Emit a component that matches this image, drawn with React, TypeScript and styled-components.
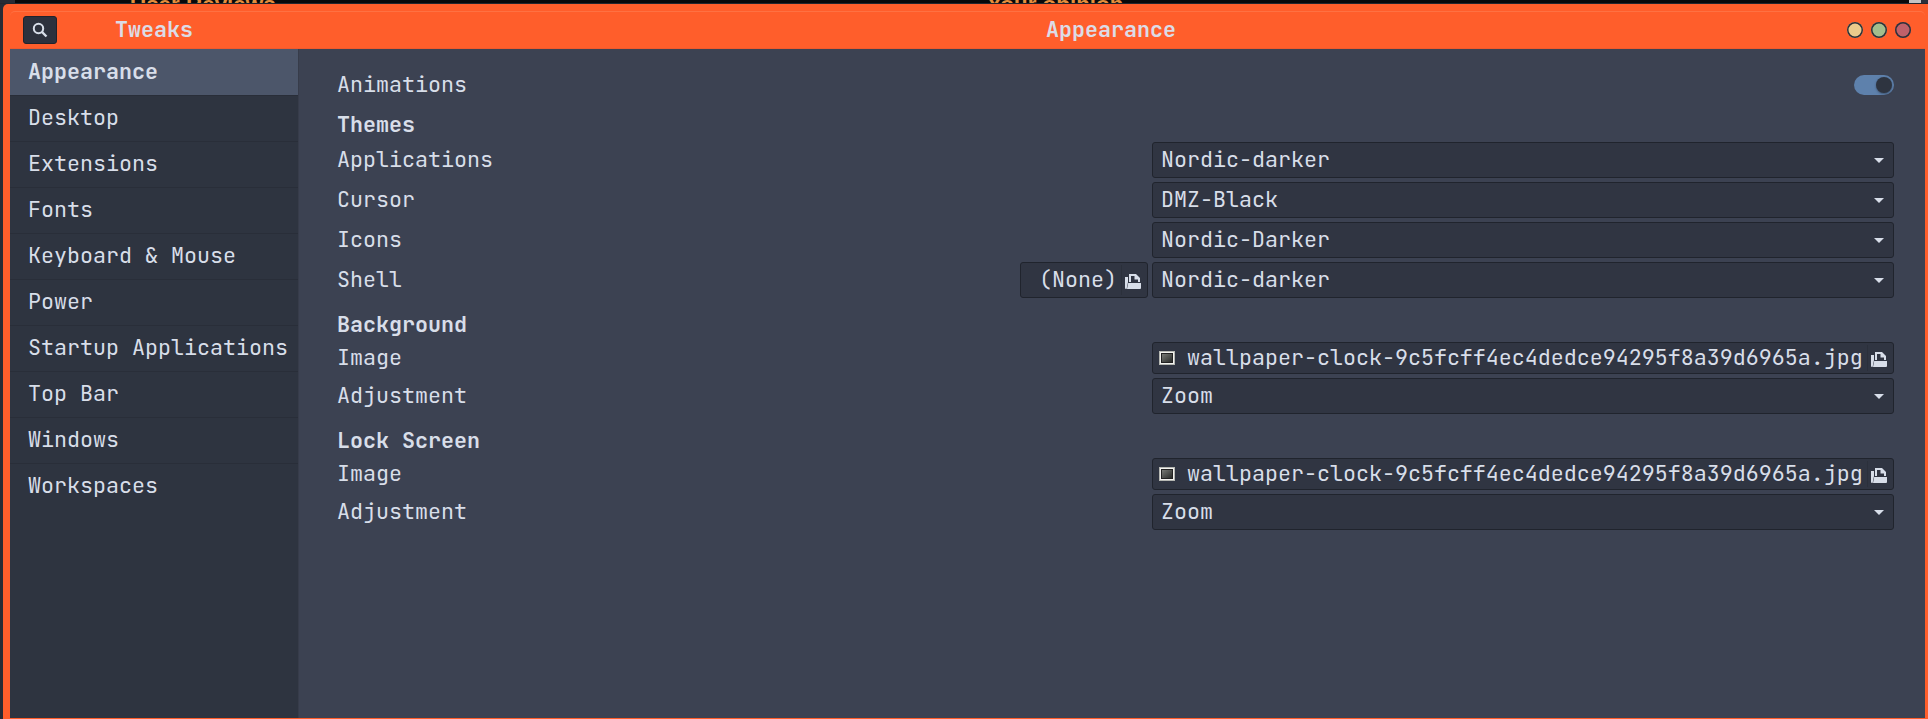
import React from "react";
import styled, { createGlobalStyle } from "styled-components";

const Global = createGlobalStyle`
  * { box-sizing: border-box; }
  body {
    margin: 0;
    overflow: hidden;
    background: #0b0b0d;
    color: #d8dee9;
    font: 21.67px/28px "JetBrains Mono", "DejaVu Sans Mono", monospace;
  }
`;

const Desktop = styled.div`
  position: relative;
  height: 719px;
  padding: 4px 0 0 3px;
  overflow: hidden;
  background: linear-gradient(90deg, #272b35 0 15px, #08090b 15px 1921px, #2b303b 1921px);
`;

const Backdrop = styled.div<{ $left: number }>`
  position: absolute;
  top: -8px;
  left: ${(p) => p.$left}px;
  font: bold 22.4px/26px "Liberation Sans", Arial, sans-serif;
  white-space: pre;
  color: #e58e3c;
`;

const BackdropThumb = styled.div`
  position: absolute;
  top: 0;
  left: 1909px;
  width: 12px;
  height: 3px;
  background: #c4c4c4;
`;

const BackdropEdge = styled.div`
  position: absolute;
  top: 3px;
  left: 0;
  width: 100%;
  height: 1px;
  background: #23262e;
`;

const Window = styled.div`
  position: relative;
  display: flex;
  flex-direction: column;
  height: 715px;
  padding: 0 3px 1px 7px;
  background: #ff5e2b;
  border-radius: 5px 0 0 0;
`;

const Header = styled.header`
  display: flex;
  align-items: center;
  height: 38px;
  margin-top: 7px;
  border-top: 1px solid #ff7142;
  border-bottom: 1px solid #f05a2c;
  border-radius: 5px 5px 0 0;
`;

const SidebarHeader = styled.div`
  display: flex;
  align-items: center;
  width: 289px;
  padding-left: 13px;
`;

const SearchButton = styled.button`
  display: flex;
  align-items: center;
  justify-content: center;
  width: 34px;
  height: 28px;
  padding: 0;
  border: 1px solid #20232c;
  border-radius: 3px;
  background: #2d313d;
`;

const Title = styled.h1`
  margin: 0;
  font-size: inherit;
  color: #dcdce6;
`;

const SidebarTitle = styled(Title)`
  margin-left: 58px;
`;

const WindowTitle = styled(Title)`
  flex: 1;
  padding-left: 747px;
`;

const Controls = styled.div`
  display: flex;
  gap: 8px;
  padding-right: 14px;
`;

const Control = styled.button<{ $color: string }>`
  width: 16px;
  height: 16px;
  padding: 0;
  border: 0;
  border-radius: 50%;
  background: ${(p) => p.$color};
  box-shadow: inset 0 0 0 1.5px #2d3039;
`;

const Body = styled.div`
  display: flex;
  flex: 1;
`;

const Sidebar = styled.nav`
  width: 289px;
  background: #2e3440;
  border-right: 1px solid #373c4a;
`;

const NavItem = styled.div<{ $active: boolean }>`
  height: 46px;
  padding-left: 18px;
  line-height: 43px;
  white-space: nowrap;
  font-weight: ${(p) => (p.$active ? "bold" : "normal")};
  background: ${(p) => (p.$active ? "#4c566a" : "transparent")};
  border-top: 1px solid ${(p) => (p.$active ? "#4c566a" : "#292e39")};
`;

const Main = styled.main`
  display: flex;
  flex: 1;
  flex-direction: column;
  gap: 4px;
  padding: 22px 31px 0 38px;
  background: #3c4252;
`;

const Heading = styled.h2<{ $space?: number }>`
  height: 28px;
  margin: ${(p) => p.$space ?? 8}px 0 0;
  font-size: inherit;
  line-height: 30px;
`;

const Row = styled.div<{ $height?: number }>`
  display: flex;
  align-items: center;
  gap: 4px;
  height: ${(p) => p.$height ?? 36}px;
`;

const Label = styled.span`
  flex: 1;
`;

const Switch = styled.div`
  display: flex;
  justify-content: flex-end;
  width: 40px;
  height: 20px;
  padding: 2px;
  border-radius: 10px;
  background: #5e81ac;
`;

const Knob = styled.div`
  width: 16px;
  height: 16px;
  border-radius: 50%;
  background: #2e3440;
  box-shadow: 0 1px 2px rgba(30, 36, 48, 0.5);
`;

const Field = styled.div<{ $width?: number; $height?: number }>`
  display: flex;
  align-items: center;
  width: ${(p) => p.$width ?? 742}px;
  height: ${(p) => p.$height ?? 36}px;
  padding: 0 9px 0 8px;
  border: 1px solid #20242d;
  border-radius: 3px;
  background: #303542;
  white-space: nowrap;
`;

const Value = styled.span`
  flex: 1;
`;

const FileField = styled(Field)`
  padding: 0 6px;
`;

const FileName = styled.span<{ $indent: number }>`
  flex: 1;
  min-width: 0;
  padding-left: ${(p) => p.$indent}px;
`;

const Divider = styled.span`
  align-self: stretch;
  width: 1px;
  margin: 2px 3px 2px 0;
  background: #2b303b;
`;

const FolderGlyph = styled.svg`
  flex: none;
  margin-top: 2px;
  fill: #d8dee9;
`;

const Arrow = () => (
  <svg width="10" height="6" viewBox="0 0 10 6" fill="#d8dee9">
    <path d="M0 1h10L5 6z" />
  </svg>
);

const SearchIcon = () => (
  <svg width="16" height="16" viewBox="0 0 16 16" fill="none" stroke="#d8dee9" strokeWidth="2">
    <circle cx="6.5" cy="6.5" r="4.7" />
    <path d="M9.9 9.9 14.5 14.5" strokeWidth="2.3" />
  </svg>
);

const OpenIcon = () => (
  <FolderGlyph width="16" height="16" viewBox="0 0 16 16">
    <path d="M0 4h3v5L1.6 16H1a1 1 0 0 1-1-1z" />
    <path d="M4 1h7l4 4v4h-2V6.5H9.5V3H6v6H4z" />
    <path d="M3.2 10H16v5a1 1 0 0 1-1 1H2z" />
  </FolderGlyph>
);

const ImageIcon = () => (
  <svg width="16" height="14" viewBox="0 0 16 14">
    <defs>
      <linearGradient id="screen" x1="0" y1="0" x2="1" y2="1">
        <stop offset="0" stopColor="#777975" />
        <stop offset="1" stopColor="#292b29" />
      </linearGradient>
    </defs>
    <rect width="16" height="14" fill="#b5b7b2" />
    <rect x="1" y="1" width="14" height="12" fill="#f2f2ef" />
    <rect x="2" y="2" width="12" height="10" fill="#222" />
    <rect x="3" y="3" width="10" height="8" fill="url(#screen)" />
  </svg>
);

const sections = [
  "Appearance",
  "Desktop",
  "Extensions",
  "Fonts",
  "Keyboard & Mouse",
  "Power",
  "Startup Applications",
  "Top Bar",
  "Windows",
  "Workspaces",
];

const wallpaper = "wallpaper-clock-9c5fcff4ec4dedce94295f8a39d6965a.jpg";

const Select = ({ value }: { value: string }) => (
  <Field>
    <Value>{value}</Value>
    <Arrow />
  </Field>
);

const SelectRow = ({ label, value }: { label: string; value: string }) => (
  <Row>
    <Label>{label}</Label>
    <Select value={value} />
  </Row>
);

const ImageRow = () => (
  <Row $height={32}>
    <Label>Image</Label>
    <FileField $height={32}>
      <ImageIcon />
      <FileName $indent={12}>{wallpaper}</FileName>
      <Divider />
      <OpenIcon />
    </FileField>
  </Row>
);

export default function App() {
  return (
    <Desktop>
      <Global />
      <Backdrop $left={130}>User Reviews</Backdrop>
      <Backdrop $left={987}>Your opinion</Backdrop>
      <BackdropThumb />
      <BackdropEdge />
      <Window>
        <Header>
          <SidebarHeader>
            <SearchButton aria-label="Search">
              <SearchIcon />
            </SearchButton>
            <SidebarTitle>Tweaks</SidebarTitle>
          </SidebarHeader>
          <WindowTitle>Appearance</WindowTitle>
          <Controls>
            <Control $color="#ebcb8b" aria-label="Minimize" />
            <Control $color="#a3be8c" aria-label="Maximize" />
            <Control $color="#bf616a" aria-label="Close" />
          </Controls>
        </Header>
        <Body>
          <Sidebar>
            {sections.map((name, i) => (
              <NavItem key={name} $active={i === 0}>
                {name}
              </NavItem>
            ))}
          </Sidebar>
          <Main>
            <Row $height={28}>
              <Label>Animations</Label>
              <Switch>
                <Knob />
              </Switch>
            </Row>
            <Heading $space={7}>Themes</Heading>
            <SelectRow label="Applications" value="Nordic-darker" />
            <SelectRow label="Cursor" value="DMZ-Black" />
            <SelectRow label="Icons" value="Nordic-Darker" />
            <Row>
              <Label>Shell</Label>
              <FileField $width={128}>
                <FileName $indent={12}>(None)</FileName>
                <Divider />
                <OpenIcon />
              </FileField>
              <Select value="Nordic-darker" />
            </Row>
            <Heading>Background</Heading>
            <ImageRow />
            <SelectRow label="Adjustment" value="Zoom" />
            <Heading>Lock Screen</Heading>
            <ImageRow />
            <SelectRow label="Adjustment" value="Zoom" />
          </Main>
        </Body>
      </Window>
    </Desktop>
  );
}
